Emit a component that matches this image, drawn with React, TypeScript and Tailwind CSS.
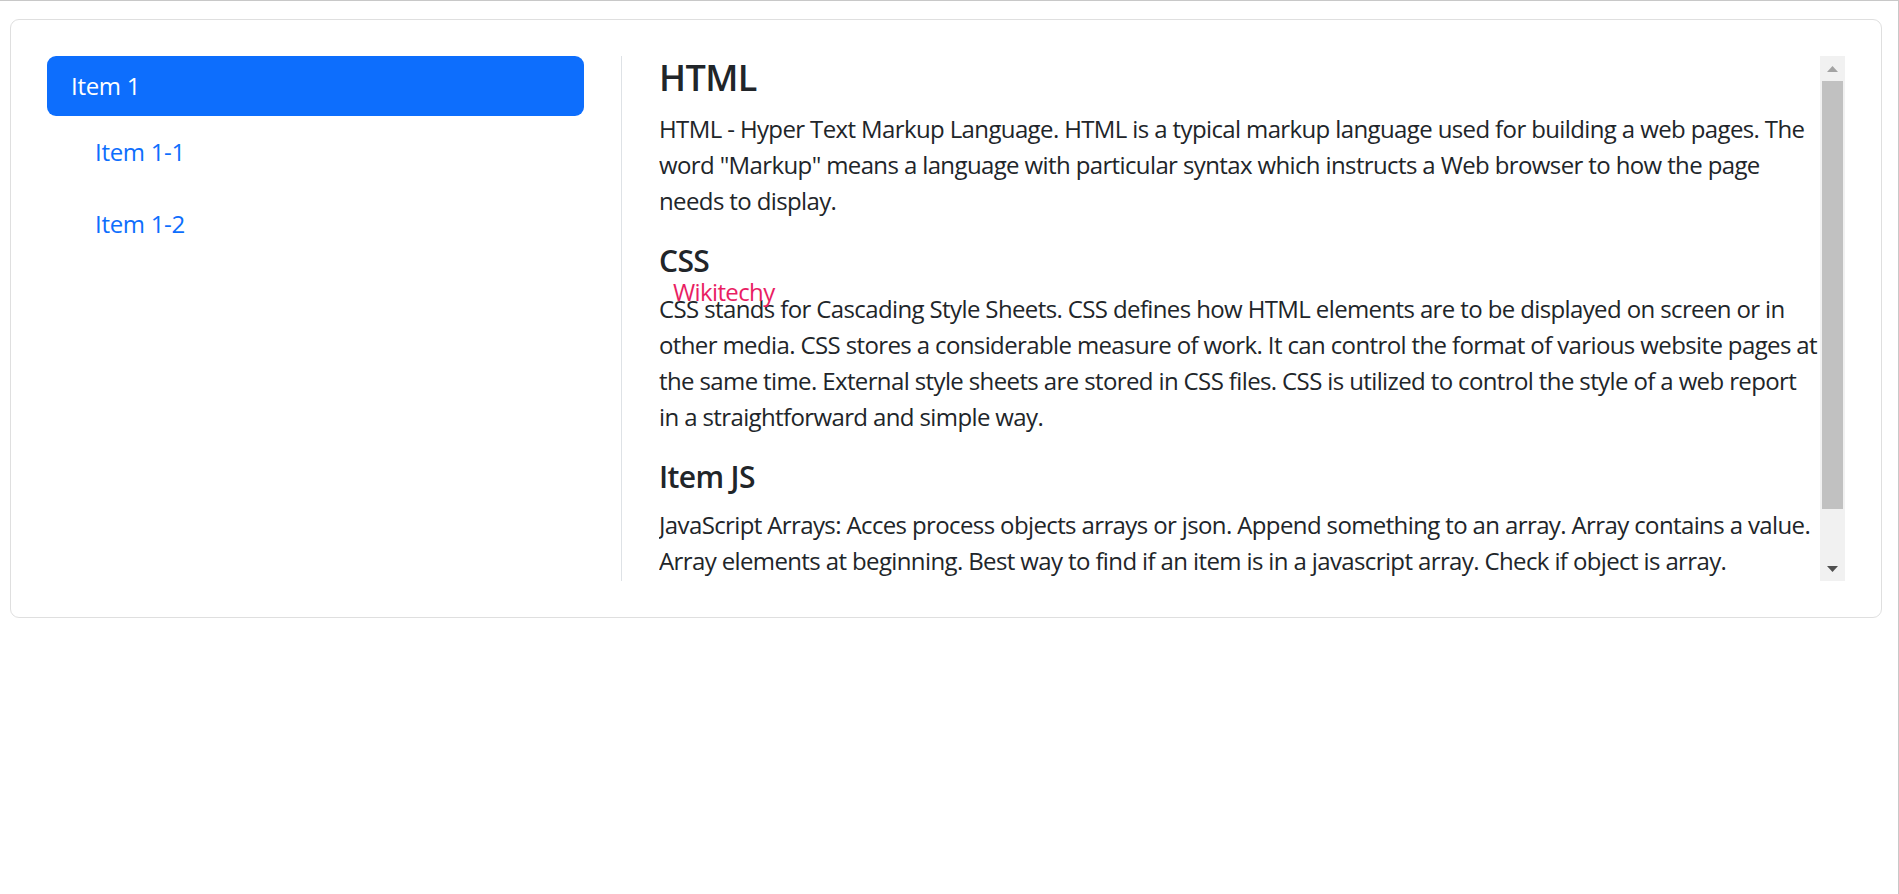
const ArrowUp = () => (
  <svg width="11" height="6" viewBox="0 0 11 6">
    <path d="M0 6 L5.5 0 L11 6 Z" fill="#a3a3a3" />
  </svg>
);

const ArrowDown = () => (
  <svg width="11" height="6" viewBox="0 0 11 6">
    <path d="M0 0 L5.5 6 L11 0 Z" fill="#505050" />
  </svg>
);

const App = () => {
  return (
    <div className="h-screen w-full border-t border-r border-[#c8c8c8] bg-white pt-[18px] pl-[10px] font-['Open_Sans',sans-serif] text-[#212529]">
      <div className="flex w-[1872px] rounded-[9px] border border-[#dfdfdf] p-[36px]">
        {/* Nav */}
        <div className="w-[574px] pr-[37px]">
          <nav className="flex flex-col">
            <a
              href="#item-1"
              className="block rounded-[9px] bg-[#0d6efd] px-6 py-3 text-[24px] leading-[36px] tracking-[-0.3px] text-white"
            >
              Item 1
            </a>
            <nav className="flex flex-col">
              <a
                href="#item-1-1"
                className="my-[6px] ml-6 block px-6 py-3 text-[24px] leading-[36px] tracking-[-0.3px] text-[#0d6efd]"
              >
                Item 1-1
              </a>
              <a
                href="#item-1-2"
                className="my-[6px] ml-6 block px-6 py-3 text-[24px] leading-[36px] tracking-[-0.3px] text-[#0d6efd]"
              >
                Item 1-2
              </a>
            </nav>
          </nav>
        </div>

        <div className="w-px self-stretch bg-[#dee2e6]" />

        {/* Content */}
        <div className="flex h-[525px] w-[1223px] pl-[37px]">
          <div className="relative flex-1 overflow-hidden whitespace-nowrap tracking-[-0.62px]">
            <h4 className="mb-3 text-[36px] font-semibold leading-[43.2px] tracking-[-0.6px]">HTML</h4>
            <p className="mb-6 text-[24px] leading-[36px]">
              HTML - Hyper Text Markup Language. HTML is a typical markup language used for building a web pages. The
              <br />
              word "Markup" means a language with particular syntax which instructs a Web browser to how the page
              <br />
              needs to display.
            </p>
            <h5 className="mb-3 text-[30px] font-semibold leading-[36px]">CSS</h5>
            <p className="mb-6 text-[24px] leading-[36px]">
              CSS stands for Cascading Style Sheets. CSS defines how HTML elements are to be displayed on screen or in
              <br />
              other media. CSS stores a considerable measure of work. It can control the format of various website pages at
              <br />
              the same time. External style sheets are stored in CSS files. CSS is utilized to control the style of a web report
              <br />
              in a straightforward and simple way.
            </p>
            <h5 className="mb-3 text-[30px] font-semibold leading-[36px]">Item JS</h5>
            <p className="mb-6 text-[24px] leading-[36px]">
              JavaScript Arrays: Acces process objects arrays or json. Append something to an array. Array contains a value.
              <br />
              Array elements at beginning. Best way to find if an item is in a javascript array. Check if object is array.
            </p>
            <span className="absolute top-[218px] left-[14px] text-[24px] leading-[36px] text-[#e91e63]">
              Wikitechy
            </span>
          </div>

          {/* Scrollbar */}
          <div className="flex w-[25px] flex-col bg-[#f1f1f1]">
            <div className="flex h-[25px] items-center justify-center">
              <ArrowUp />
            </div>
            <div className="mx-[2px] h-[428px] bg-[#c1c1c1]" />
            <div className="flex-1" />
            <div className="flex h-[25px] items-center justify-center">
              <ArrowDown />
            </div>
          </div>
        </div>
      </div>
    </div>
  );
};

export default App;
